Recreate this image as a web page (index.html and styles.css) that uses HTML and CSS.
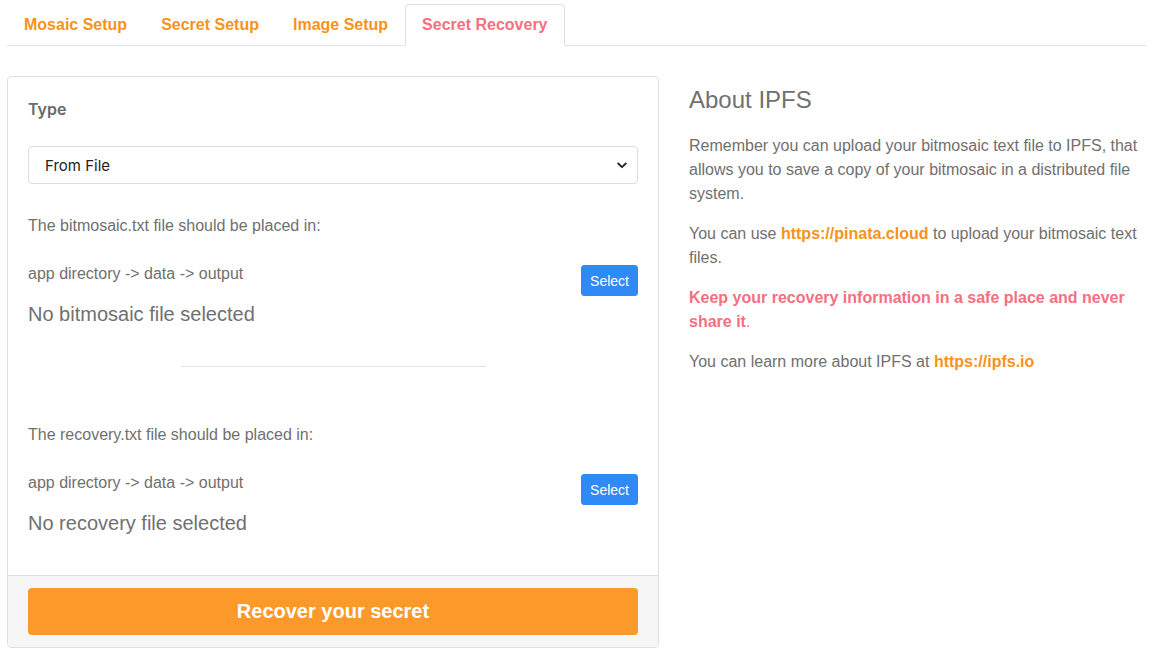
FILE: index.html
```html
<!DOCTYPE html>
<html>
<head>
<meta charset="utf-8">
<link rel="stylesheet" href="styles.css">
</head>
<body>
<div class="page">
  <nav class="tabs">
    <a class="tab">Mosaic Setup</a>
    <a class="tab">Secret Setup</a>
    <a class="tab">Image Setup</a>
    <a class="tab active">Secret Recovery</a>
  </nav>
  <div class="content">
    <div class="card">
      <div class="card-body">
        <div class="label">Type</div>
        <div class="select">
          <span>From File</span>
          <svg class="chev" width="10" height="7" viewBox="0 0 10 7"><path d="M1.2 1.5 L5 5.2 L8.8 1.5" fill="none" stroke="#222" stroke-width="1.8" stroke-linecap="round" stroke-linejoin="round"/></svg>
        </div>
        <p class="hint">The bitmosaic.txt file should be placed in:</p>
        <div class="filerow">
          <div class="filetext">
            <p class="path">app directory -&gt; data -&gt; output</p>
            <div class="status">No bitmosaic file selected</div>
          </div>
          <button class="btn-select">Select</button>
        </div>
        <hr class="divider">
        <p class="hint second">The recovery.txt file should be placed in:</p>
        <div class="filerow">
          <div class="filetext">
            <p class="path">app directory -&gt; data -&gt; output</p>
            <div class="status">No recovery file selected</div>
          </div>
          <button class="btn-select">Select</button>
        </div>
      </div>
      <div class="card-footer">
        <button class="btn-recover">Recover your secret</button>
      </div>
    </div>
    <aside class="about">
      <h2>About IPFS</h2>
      <p>Remember you can upload your bitmosaic text file to IPFS, that allows you to save a copy of your bitmosaic in a distributed file system.</p>
      <p>You can use <a class="link">https://pinata.cloud</a> to upload your bitmosaic text files.</p>
      <p class="warn"><strong>Keep your recovery information in a safe place and never share it</strong>.</p>
      <p>You can learn more about IPFS at <a class="link">https://ipfs.io</a></p>
    </aside>
  </div>
</div>
</body>
</html>
```

FILE: styles.css
```css
* { box-sizing: border-box; }
html, body { margin: 0; padding: 0; background: #fff; }
body {
  font-family: "Liberation Sans", Arial, sans-serif;
  font-size: 16px;
  color: #707070;
}
.page { padding: 4px 10px 0 7px; }
.tabs {
  display: flex;
  border-bottom: 1px solid #dee2e6;
  height: 42px;
}
.tab {
  display: block;
  padding: 0 16px;
  height: 42px;
  line-height: 40px;
  border: 1px solid transparent;
  border-top-left-radius: 4px;
  border-top-right-radius: 4px;
  font-weight: bold;
  color: #f7931a;
  margin-bottom: -1px;
}
.tab.active {
  color: #f66f7f;
  border-color: #dee2e6 #dee2e6 #fff;
  background: #fff;
}
.content {
  display: grid;
  grid-template-columns: 652px 1fr;
  column-gap: 30px;
  margin-top: 30px;
}
.card {
  border: 1px solid #dfdfdf;
  border-radius: 4px;
  overflow: hidden;
}
.card-body { padding: 20px 20px 40px; }
.label {
  font-family: Inter, "Liberation Sans", sans-serif;
  font-weight: 600;
  font-size: 16px;
  line-height: 24px;
  color: #6a6a6a;
  margin-bottom: 25px;
}
.select {
  height: 38px;
  border: 1px solid #dcdcdc;
  border-radius: 4px;
  display: flex;
  align-items: center;
  justify-content: space-between;
  padding: 0 10px 0 16px;
  font-family: Inter, "Liberation Sans", sans-serif;
  font-size: 15px;
  color: #222;
}
.chev { display: block; }
.hint {
  margin: 30px 0 0;
  line-height: 24px;
}
.hint.second { margin-top: 56px; }
.filerow {
  display: flex;
  justify-content: space-between;
  align-items: flex-start;
  margin-top: 24px;
}
.path { margin: 0; line-height: 24px; }
.status {
  font-size: 20px;
  line-height: 24px;
  margin-top: 16px;
}
.btn-select {
  margin-top: 3px;
  height: 31px;
  padding: 0 8px;
  background: #2f8af5;
  color: #fff;
  border: 1px solid #2f8af5;
  border-radius: 3px;
  font-family: "Liberation Sans", Arial, sans-serif;
  font-size: 14px;
}
.divider {
  width: 305px;
  margin: 40px auto 0;
  border: 0;
  border-top: 1px solid #e2e2e2;
  height: 0;
}
.card-footer {
  background: #f6f6f6;
  border-top: 1px solid #dfdfdf;
  padding: 12px 20px;
}
.btn-recover {
  display: block;
  width: 100%;
  height: 47px;
  background: #fb9a2a;
  border: 0;
  border-radius: 4px;
  color: #fff;
  font-family: "Liberation Sans", Arial, sans-serif;
  font-weight: bold;
  font-size: 20px;
}
.about { padding-top: 9px; }
.about h2 {
  margin: 0 0 20px;
  font-weight: normal;
  font-size: 24px;
  line-height: 29px;
  color: #707070;
}
.about p {
  margin: 0 0 16px;
  line-height: 24px;
}
.link { color: #f7931a; font-weight: bold; }
.warn { color: #f66f7f; }
```
